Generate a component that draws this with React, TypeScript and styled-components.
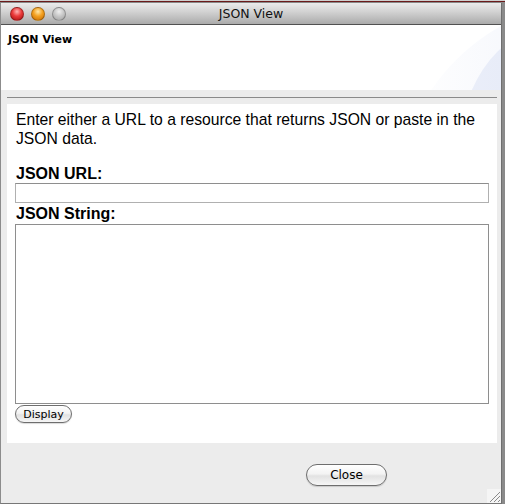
import React from 'react';
import styled, { createGlobalStyle } from 'styled-components';

const GlobalStyle = createGlobalStyle`
    html, body {
        margin: 0;
        padding: 0;
        background: #5f5f5f;
    }
    body {
        width: 505px;
        height: 504px;
        overflow: hidden;
    }
`;

const Desktop = styled.div`
    width: 505px;
    height: 504px;
    box-sizing: border-box;
    padding-top: 3px;
    background: linear-gradient(to bottom, #cfcfcf 0, #cfcfcf 1px, #6b1a1a 1px, #6b1a1a 2px, #8a8a8a 2px);
`;

const Window = styled.div`
    width: 502px;
    height: 501px;
    box-sizing: border-box;
    border-left: 1px solid #8c8c8c;
    border-right: 1px solid #6f6f6f;
    border-bottom: 1px solid #777;
    background: #ececec;
    display: flex;
    flex-direction: column;
    position: relative;
`;

const TitleBar = styled.div`
    height: 21px;
    flex-shrink: 0;
    display: flex;
    align-items: center;
    justify-content: center;
    position: relative;
    border-radius: 4px 4px 0 0;
    background: linear-gradient(to bottom, #ebebeb, #d3d3d3 40%, #ababab);
    border-bottom: 1px solid #515151;
    font-family: "DejaVu Sans", "Liberation Sans", sans-serif;
    font-size: 12.5px;
    color: #111;
`;

const Lights = styled.div`
    position: absolute;
    left: 9px;
    top: 4px;
    display: flex;
    gap: 7px;
`;

const Light = styled.span<{ tone: string }>`
    width: 14px;
    height: 14px;
    border-radius: 50%;
    box-sizing: border-box;
    border: 1px solid rgba(0, 0, 0, 0.25);
    background: ${(p) => p.tone};
`;

const Header = styled.div`
    height: 65px;
    flex-shrink: 0;
    box-sizing: border-box;
    padding: 8px 7px;
    position: relative;
    background: #ffffff;
    font-family: "DejaVu Sans", "Liberation Sans", sans-serif;
    font-size: 11px;
    font-weight: bold;
    color: #000;
`;

const Swoosh = styled.svg`
    position: absolute;
    right: 0;
    top: 0;
`;

const Divider = styled.div`
    margin: 7px 4px 6px 6px;
    height: 1px;
    background: #8a8a8a;
    flex-shrink: 0;
`;

const Panel = styled.div`
    margin: 0 4px 0 6px;
    height: 339px;
    flex-shrink: 0;
    box-sizing: border-box;
    padding: 6px 8px 0 8px;
    background: #ffffff;
    font-family: "Liberation Sans", Arial, sans-serif;
    color: #000;
    display: flex;
    flex-direction: column;
`;

const Intro = styled.p`
    margin: 0 0 0 1px;
    font-size: 15.7px;
    line-height: 19px;
`;

const Label = styled.div<{ gap: number }>`
    margin-top: ${(p) => p.gap}px;
    margin-left: 1px;
    font-size: 16px;
    font-weight: bold;
    line-height: 19px;
`;

const UrlInput = styled.input`
    width: 474px;
    height: 20px;
    box-sizing: border-box;
    border: 1px solid #b0b0b0;
    border-top-color: #8e8e8e;
    outline: none;
    padding: 0 3px;
`;

const JsonArea = styled.textarea`
    margin-top: 1px;
    width: 474px;
    height: 180px;
    box-sizing: border-box;
    border: 1px solid #8e8e8e;
    resize: none;
    outline: none;
`;

const PillButton = styled.button<{ w: number; h: number; size: number }>`
    width: ${(p) => p.w}px;
    height: ${(p) => p.h}px;
    border-radius: ${(p) => p.h / 2}px;
    border: 1px solid #6e6e6e;
    background: linear-gradient(to bottom, #ffffff 0%, #f3f3f3 45%, #e2e2e2 55%, #f6f6f6 100%);
    box-shadow: 0 1px 1px rgba(0, 0, 0, 0.15);
    font-family: "DejaVu Sans", "Liberation Sans", sans-serif;
    font-size: ${(p) => p.size}px;
    color: #000;
    padding: 0;
    display: flex;
    align-items: center;
    justify-content: center;
`;

const DisplayRow = styled.div`
    margin-top: 1px;
    display: flex;
`;

const Footer = styled.div`
    flex: 1;
    display: flex;
    justify-content: flex-end;
    align-items: flex-start;
    padding: 21px 114px 0 0;
`;

const Grip = styled.svg`
    position: absolute;
    right: 0;
    bottom: 0;
`;

const App: React.FC = () => {
    return (
        <>
            <GlobalStyle />
            <Desktop>
                <Window>
                    <TitleBar>
                        <Lights>
                            <Light tone="radial-gradient(circle at 50% 30%, #ffb3b3 0, #ea3a3a 45%, #a50f0f 100%)" />
                            <Light tone="radial-gradient(circle at 50% 30%, #ffe7a8 0, #f4a020 45%, #c56a00 100%)" />
                            <Light tone="radial-gradient(circle at 50% 30%, #efefef 0, #c4c4c4 50%, #a2a2a2 100%)" />
                        </Lights>
                        JSON View
                    </TitleBar>
                    <Header>
                        JSON View
                        {/* pale blue corner decoration */}
                        <Swoosh width="90" height="65" viewBox="0 0 90 65">
                            <defs>
                                <linearGradient id="outerFade" x1="0" y1="0" x2="1" y2="0">
                                    <stop offset="0" stopColor="#ffffff" />
                                    <stop offset="0.6" stopColor="#eef1fa" />
                                    <stop offset="1" stopColor="#e6ebf8" />
                                </linearGradient>
                                <linearGradient id="innerFade" x1="0" y1="0" x2="1" y2="0">
                                    <stop offset="0" stopColor="#eaeef9" />
                                    <stop offset="1" stopColor="#dde3f4" />
                                </linearGradient>
                            </defs>
                            <circle cx="190" cy="180" r="205" fill="url(#outerFade)" />
                            <circle cx="170" cy="110" r="118" fill="url(#innerFade)" />
                        </Swoosh>
                    </Header>
                    <Divider />
                    <Panel>
                        <Intro>
                            Enter either a URL to a resource that returns JSON or paste in the JSON data.
                        </Intro>
                        <Label gap={16}>JSON URL:</Label>
                        <UrlInput type="text" />
                        <Label gap={1}>JSON String:</Label>
                        <JsonArea />
                        <DisplayRow>
                            <PillButton w={57} h={18} size={11}>Display</PillButton>
                        </DisplayRow>
                    </Panel>
                    <Footer>
                        <PillButton w={81} h={22} size={12}>Close</PillButton>
                    </Footer>
                    <Grip width="14" height="14" viewBox="0 0 14 14">
                        <rect width="14" height="14" fill="#f5f5f5" />
                        <path d="M13 3 L3 13 M13 7 L7 13 M13 11 L11 13" stroke="#8a8a8a" strokeWidth="1" />
                    </Grip>
                </Window>
            </Desktop>
        </>
    );
};

export default App;
